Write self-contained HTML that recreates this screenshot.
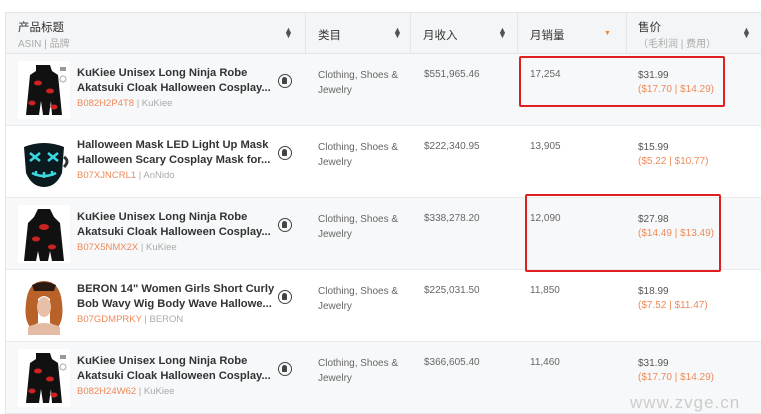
<!DOCTYPE html>
<html><head><meta charset="utf-8"><style>
*{margin:0;padding:0;box-sizing:border-box}
body{width:761px;height:413px;background:#fff;font-family:"Liberation Sans","Noto Sans CJK SC",sans-serif;position:relative;overflow:hidden;color:#555}
.t{position:absolute;left:5px;top:12px;width:760px;border-left:1px solid #e4e6e8;border-top:1px solid #e4e6e8}
.h{height:41px;background:#f4f5f6;position:relative;border-bottom:1px solid #e4e6e8}
.r{height:72px;position:relative;border-bottom:1px solid #e8eaec}
.g{background:#f7f8f9}
.w{background:#fff}
.a{position:absolute;font-size:10px;color:#666}
.hc{position:absolute;top:0;height:40px;border-left:1px solid #e4e6e8}
.ht{position:absolute;font-size:11.5px;color:#333}
.sub{position:absolute;font-size:10px;color:#aaa}
.sort{position:absolute;font-size:9px;color:#555;line-height:5px}
.title{position:absolute;left:71px;top:12px;font-size:11.2px;font-weight:bold;color:#333;line-height:15px;width:200px;white-space:nowrap}
.asin{position:absolute;left:71px;top:44px;font-size:9.5px;color:#ee8a5a}
.asin span{color:#aaa}
.ico{position:absolute;left:272px;top:20px;width:14px;height:14px;border:1.5px solid #444;border-radius:50%}
.ico:after{content:"";position:absolute;left:3px;top:2px;width:5px;height:7px;border-radius:3px 3px 1px 1px;background:#444}
.img{position:absolute;left:12px;top:7px;width:52px;height:58px;background:#fff}
.price{position:absolute;left:632px;top:15px;font-size:10px;color:#555;line-height:14px}
.price i{font-style:normal;color:#ee8a5a}
.box{position:absolute;border:2px solid #e02020;border-radius:2px}
</style></head><body>
<div class="t">
<div class="h">
 <div class="ht" style="left:12px;top:6px">产品标题</div>
 <div class="sub" style="left:12px;top:22px">ASIN | 品牌</div>
 <div class="sort" style="left:278px;top:15px">▲<br>▼</div>
 <div class="hc" style="left:299px"></div>
 <div class="ht" style="left:312px;top:14px">类目</div>
 <div class="sort" style="left:387px;top:15px">▲<br>▼</div>
 <div class="hc" style="left:404px"></div>
 <div class="ht" style="left:417px;top:14px">月收入</div>
 <div class="sort" style="left:492px;top:15px">▲<br>▼</div>
 <div class="hc" style="left:511px"></div>
 <div class="ht" style="left:524px;top:14px">月销量</div>
 <div class="sort" style="left:598px;top:18px;color:#f08040;font-size:7px">▼</div>
 <div class="hc" style="left:620px"></div>
 <div class="ht" style="left:632px;top:6px">售价</div>
 <div class="sub" style="left:632px;top:22px">（毛利润 | 费用）</div>
 <div class="sort" style="left:736px;top:15px">▲<br>▼</div>
</div>

<div class="r g">
 <div class="img"><svg width="52" height="58" viewBox="0 0 52 58"><path d="M18 4h14l2 6 6 4 4 40H34l-1-14-2 14h-6l-2-14-2 14H8L12 14l6-4z" fill="#111"/><ellipse cx="20" cy="22" rx="4" ry="2.5" fill="#c22"/><ellipse cx="32" cy="30" rx="4" ry="2.5" fill="#c22"/><ellipse cx="14" cy="42" rx="3.5" ry="2.5" fill="#c22"/><ellipse cx="36" cy="46" rx="3.5" ry="2.5" fill="#c22"/><rect x="42" y="6" width="6" height="4" fill="#999"/><circle cx="45" cy="18" r="3" fill="none" stroke="#aaa"/></svg></div>
 <div class="title">KuKiee Unisex Long Ninja Robe<br>Akatsuki Cloak Halloween Cosplay...</div>
 <div class="asin">B082H2P4T8 <span>| KuKiee</span></div>
 <div class="ico"></div>
 <div class="a" style="left:312px;top:14px;line-height:15px">Clothing, Shoes &amp;<br>Jewelry</div>
 <div class="a" style="left:418px;top:15px">$551,965.46</div>
 <div class="a" style="left:524px;top:15px">17,254</div>
 <div class="price">$31.99<br><i>($17.70 | $14.29)</i></div>
</div>

<div class="r w">
 <div class="img"><svg width="52" height="58" viewBox="0 0 52 58"><path d="M6 14q20-8 40 0l-2 26q-6 14-18 14T8 40z" fill="#0a1a1e"/><path d="M12 20l10 8M22 20l-10 8M30 20l10 8M40 20l-10 8M14 40q12 6 24 0M18 38v5M26 39v6M34 38v5" stroke="#3cd8e0" stroke-width="2.5" fill="none"/><path d="M46 24q6 4 0 10" stroke="#333" stroke-width="3" fill="none"/></svg></div>
 <div class="title">Halloween Mask LED Light Up Mask<br>Halloween Scary Cosplay Mask for...</div>
 <div class="asin">B07XJNCRL1 <span>| AnNido</span></div>
 <div class="ico"></div>
 <div class="a" style="left:312px;top:14px;line-height:15px">Clothing, Shoes &amp;<br>Jewelry</div>
 <div class="a" style="left:418px;top:15px">$222,340.95</div>
 <div class="a" style="left:524px;top:15px">13,905</div>
 <div class="price">$15.99<br><i>($5.22 | $10.77)</i></div>
</div>

<div class="r g">
 <div class="img"><svg width="52" height="58" viewBox="0 0 52 58"><path d="M20 4h12l4 8 6 6 4 38H34l-2-10-2 10h-8l-2-10-2 10H6l4-38 6-6z" fill="#111"/><ellipse cx="26" cy="22" rx="5" ry="3" fill="#c22"/><ellipse cx="18" cy="34" rx="4" ry="2.5" fill="#c22"/><ellipse cx="34" cy="42" rx="4" ry="2.5" fill="#c22"/></svg></div>
 <div class="title">KuKiee Unisex Long Ninja Robe<br>Akatsuki Cloak Halloween Cosplay...</div>
 <div class="asin">B07X5NMX2X <span>| KuKiee</span></div>
 <div class="ico"></div>
 <div class="a" style="left:312px;top:14px;line-height:15px">Clothing, Shoes &amp;<br>Jewelry</div>
 <div class="a" style="left:418px;top:15px">$338,278.20</div>
 <div class="a" style="left:524px;top:15px">12,090</div>
 <div class="price">$27.98<br><i>($14.49 | $13.49)</i></div>
</div>

<div class="r w">
 <div class="img"><svg width="52" height="58" viewBox="0 0 52 58"><path d="M26 4q-16 0-18 22-2 16 4 24l8-4V22q6-6 12 0v24l8 4q6-8 4-24Q42 4 26 4z" fill="#b8622a"/><path d="M14 8q12-6 24 0l-2 6H16z" fill="#2a1a12"/><ellipse cx="26" cy="30" rx="7" ry="10" fill="#e8c0a8"/><path d="M10 50q16-8 32 0v8H10z" fill="#e4bca6"/></svg></div>
 <div class="title">BERON 14" Women Girls Short Curly<br>Bob Wavy Wig Body Wave Hallowe...</div>
 <div class="asin">B07GDMPRKY <span>| BERON</span></div>
 <div class="ico"></div>
 <div class="a" style="left:312px;top:14px;line-height:15px">Clothing, Shoes &amp;<br>Jewelry</div>
 <div class="a" style="left:418px;top:15px">$225,031.50</div>
 <div class="a" style="left:524px;top:15px">11,850</div>
 <div class="price">$18.99<br><i>($7.52 | $11.47)</i></div>
</div>

<div class="r g">
 <div class="img"><svg width="52" height="58" viewBox="0 0 52 58"><path d="M18 4h14l2 6 6 4 4 40H34l-1-14-2 14h-6l-2-14-2 14H8L12 14l6-4z" fill="#111"/><ellipse cx="20" cy="22" rx="4" ry="2.5" fill="#c22"/><ellipse cx="32" cy="30" rx="4" ry="2.5" fill="#c22"/><ellipse cx="14" cy="42" rx="3.5" ry="2.5" fill="#c22"/><ellipse cx="36" cy="46" rx="3.5" ry="2.5" fill="#c22"/><rect x="42" y="6" width="6" height="4" fill="#999"/><circle cx="45" cy="18" r="3" fill="none" stroke="#aaa"/></svg></div>
 <div class="title">KuKiee Unisex Long Ninja Robe<br>Akatsuki Cloak Halloween Cosplay...</div>
 <div class="asin">B082H24W62 <span>| KuKiee</span></div>
 <div class="ico"></div>
 <div class="a" style="left:312px;top:14px;line-height:15px">Clothing, Shoes &amp;<br>Jewelry</div>
 <div class="a" style="left:418px;top:15px">$366,605.40</div>
 <div class="a" style="left:524px;top:15px">11,460</div>
 <div class="price">$31.99<br><i>($17.70 | $14.29)</i></div>
</div>
</div>
<div class="box" style="left:519px;top:56px;width:206px;height:51px"></div>
<div class="box" style="left:525px;top:194px;width:196px;height:78px"></div>
<div style="position:absolute;left:630px;top:393px;font-size:17px;color:#ccc;letter-spacing:1px">www.zvge.cn</div>
</body></html>
